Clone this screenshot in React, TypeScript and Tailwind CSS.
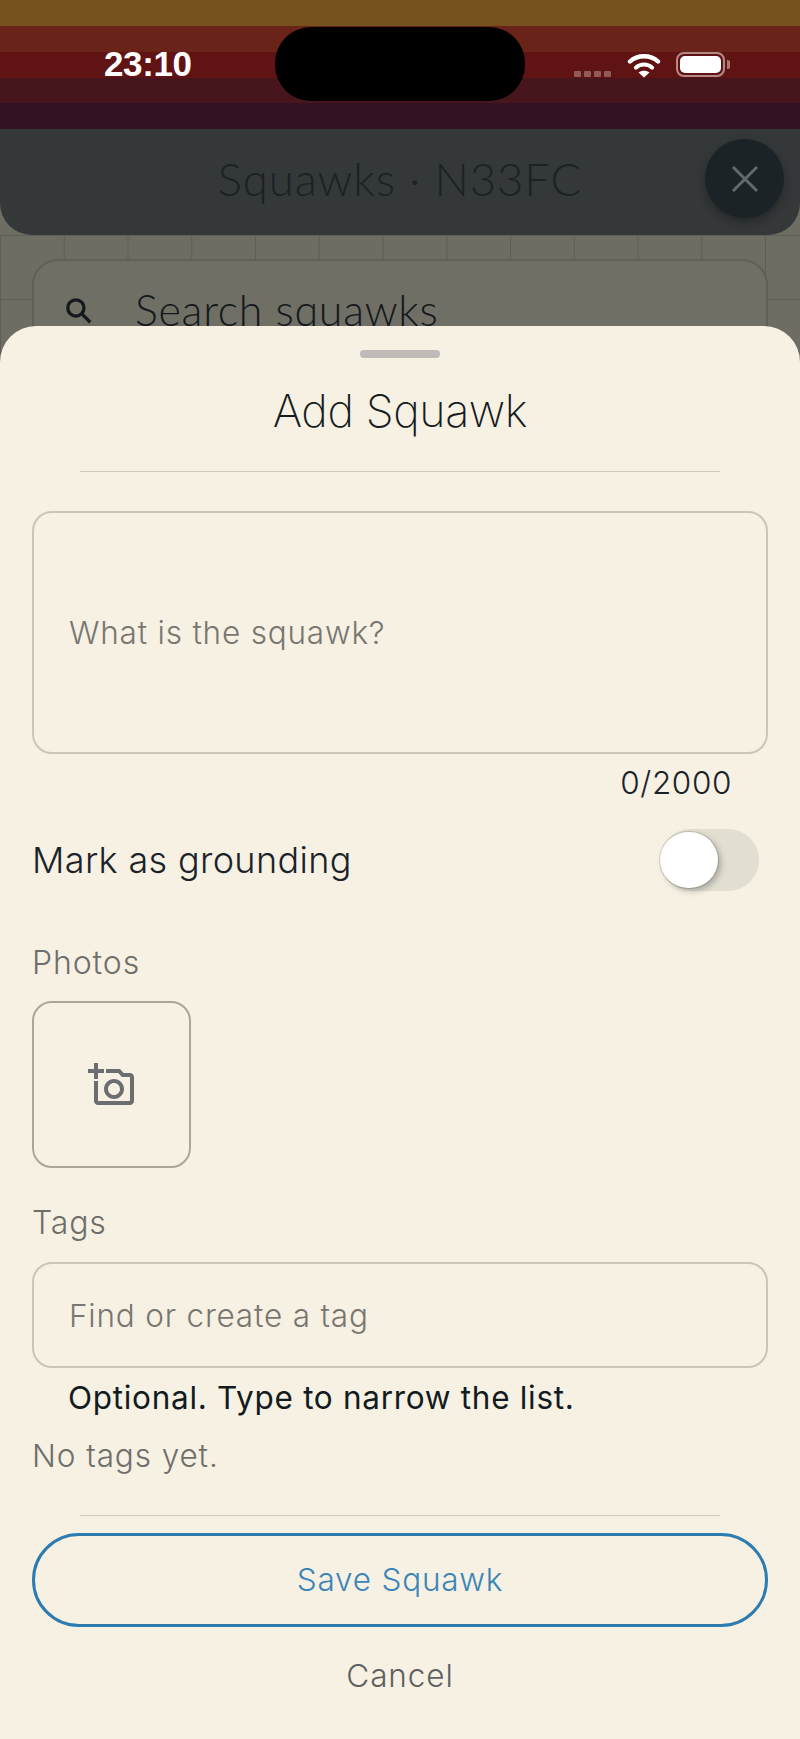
export default function App() {
  return (
    <div className="relative h-[1739px] w-[800px] overflow-hidden bg-[#6e6d63] font-['Inter',sans-serif]">
      <div className="relative h-[129px]">
        <div className="h-[26px] bg-[#75521e]" />
        <div className="h-[26px] bg-[#6a2319]" />
        <div className="h-[26px] bg-[#5f1413]" />
        <div className="h-[25px] bg-[#47151c]" />
        <div className="h-[26px] bg-[#331223]" />
        <div className="absolute left-[104px] top-[46px] font-['Liberation_Sans',sans-serif] text-[35px] font-bold leading-9 tracking-[-0.4px] text-white">23:10</div>
        <div className="absolute left-[275px] top-[27px] h-[74px] w-[250px] rounded-[36px] bg-black" />
        <div className="absolute left-[574px] top-[71px] flex gap-[3px]">
          <div className="h-[6px] w-[7px] rounded-[1px] bg-[#8f5a58]" />
          <div className="h-[6px] w-[7px] rounded-[1px] bg-[#8f5a58]" />
          <div className="h-[6px] w-[7px] rounded-[1px] bg-[#8f5a58]" />
          <div className="h-[6px] w-[7px] rounded-[1px] bg-[#8f5a58]" />
        </div>
        <svg className="absolute left-[627px] top-[52px]" width="34" height="26" viewBox="0 0 34 26" fill="none">
          <path d="M3 9.5C10.5 2.5 23.5 2.5 31 9.5" stroke="white" strokeWidth="4.4" strokeLinecap="round" />
          <path d="M9 15.5C13.5 11.5 20.5 11.5 25 15.5" stroke="white" strokeWidth="4.2" strokeLinecap="round" />
          <path d="M17 25.5L11.5 20.5C14.5 18 19.5 18 22.5 20.5Z" fill="white" />
        </svg>
        <div className="absolute left-[676px] top-[52px] flex h-[25px] w-[49px] items-center justify-center rounded-[8px] border-2 border-[#b58886]">
          <div className="h-[17px] w-[41px] rounded-[5px] bg-white" />
        </div>
        <div className="absolute left-[727px] top-[60px] h-[9px] w-[3px] rounded-r-[2px] bg-[#a87a78]" />
      </div>

      <div className="relative flex h-[106px] items-center justify-center rounded-b-[32px] bg-[#343839]">
        <div className="mb-[6px] font-['Lato',sans-serif] text-[45.5px] font-light leading-none tracking-[0.9px] text-[#1b2226]">Squawks · N33FC</div>
        <div className="absolute left-[705px] top-[10px] flex h-[79px] w-[79px] items-center justify-center rounded-full bg-[#1c2327] shadow-[0_4px_10px_rgba(0,0,0,0.3)]">
          <svg width="30" height="30" viewBox="0 0 30 30" fill="none" stroke="#62696b" strokeWidth="3">
            <path d="M3 3L27 27M27 3L3 27" />
          </svg>
        </div>
      </div>

      <div className="h-[400px] bg-[linear-gradient(to_right,#5f5e55_1px,transparent_1px),linear-gradient(to_bottom,#5f5e55_1px,transparent_1px)] bg-[size:63.75px_64px] px-[32px] pt-[24px]">
        <div className="flex h-[106px] items-start gap-[41px] rounded-[26px] border-2 border-[#625f55] bg-[#706f65] pl-[30px] pt-[25px]">
          <svg width="30" height="30" viewBox="0 0 24 24" fill="none" stroke="#14191c" strokeWidth="2.6" className="mt-[10px] shrink-0">
            <circle cx="9.5" cy="9.5" r="6.5" />
            <path d="M14.5 14.5L21 21" />
          </svg>
          <div className="font-['Lato',sans-serif] text-[43px] font-light leading-[48px] tracking-[0.7px] text-[#14191c]">Search squawks</div>
        </div>
      </div>

      <div className="absolute inset-x-0 bottom-0 top-[326px] flex flex-col rounded-t-[36px] bg-[#f7f1e4] px-[32px] font-light">
        <div className="mx-auto mt-[24px] h-2 w-[80px] shrink-0 rounded-full bg-[#bdbab8]" />
        <div className="mt-[18px] h-[70px] shrink-0 text-center text-[44.8px] font-extralight leading-[70px] tracking-[-0.4px] text-[#141c21]">Add Squawk</div>
        <div className="mx-[48px] mt-[25px] h-px shrink-0 bg-[#cfc9bb]" />
        <div className="mt-[39px] flex h-[243px] shrink-0 items-center rounded-[20px] border-2 border-[#cbc5b7] pl-[35px]">
          <div className="text-[31.5px] leading-9 tracking-[0.8px] text-[#77776f]">What is the squawk?</div>
        </div>
        <div className="mt-[11px] h-9 shrink-0 pr-[36px] text-right text-[31.5px] leading-9 tracking-[0.6px] text-[#1b2329]">0/2000</div>
        <div className="mt-[28px] flex h-[62px] shrink-0 items-center justify-between pr-[9px]">
          <div className="text-[36px] leading-[62px] tracking-[0.35px] text-[#1b2329]">Mark as grounding</div>
          <div className="flex h-[62px] w-[99px] items-center rounded-full bg-[#e2dfd2]">
            <div className="h-[56px] w-[58px] rounded-full bg-white shadow-[0_0_0_1px_rgba(0,0,0,0.12),3px_3px_6px_rgba(0,0,0,0.25)]" />
          </div>
        </div>
        <div className="mt-[54px] h-9 shrink-0 text-[32px] leading-9 tracking-[0.9px] text-[#6e6e6a]">Photos</div>
        <div className="mt-[20px] flex h-[167px] w-[159px] shrink-0 items-center justify-center rounded-[20px] border-2 border-[#aaa799]">
          <svg width="48" height="48" viewBox="0 0 24 24" fill="#6b6e6e">
            <path d="M21 6h-3.17L16 4H9v2h6.12l1.83 2H21v12H5V10H3v10c0 1.1.9 2 2 2h16c1.1 0 2-.9 2-2V8c0-1.1-.9-2-2-2zM8 14c0 2.76 2.24 5 5 5s5-2.24 5-5-2.24-5-5-5-5 2.24-5 5zm5-3c1.65 0 3 1.35 3 3s-1.35 3-3 3-3-1.35-3-3 1.35-3 3-3zM5 6h3V4H5V1H3v3H0v2h3v3h2z" />
          </svg>
        </div>
        <div className="mt-[37px] h-9 shrink-0 text-[32px] leading-9 tracking-[0.8px] text-[#6e6e6a]">Tags</div>
        <div className="mt-[21px] flex h-[106px] shrink-0 items-center rounded-[20px] border-2 border-[#cbc5b7] pl-[35px] pt-[2px]">
          <div className="text-[31.5px] leading-9 tracking-[0.8px] text-[#77776f]">Find or create a tag</div>
        </div>
        <div className="mt-[12px] h-9 shrink-0 pl-[36px] text-[31.5px] font-normal leading-9 tracking-[0.7px] text-[#121b20]">Optional. Type to narrow the list.</div>
        <div className="mt-[22px] h-9 shrink-0 text-[31.5px] leading-9 tracking-[0.9px] text-[#6e6e6a]">No tags yet.</div>
        <div className="mx-[48px] mt-[41px] h-px shrink-0 bg-[#cfc9bb]" />
        <div className="mt-[17px] flex h-[94px] shrink-0 items-center justify-center rounded-full border-[3px] border-[#2e7bb0] text-[31.5px] leading-9 tracking-[0.8px] text-[#3b85b8]">Save Squawk</div>
        <div className="mt-[31px] h-9 shrink-0 text-center text-[31.5px] leading-9 tracking-[0.9px] text-[#5f6060]">Cancel</div>
      </div>
    </div>
  );
}
